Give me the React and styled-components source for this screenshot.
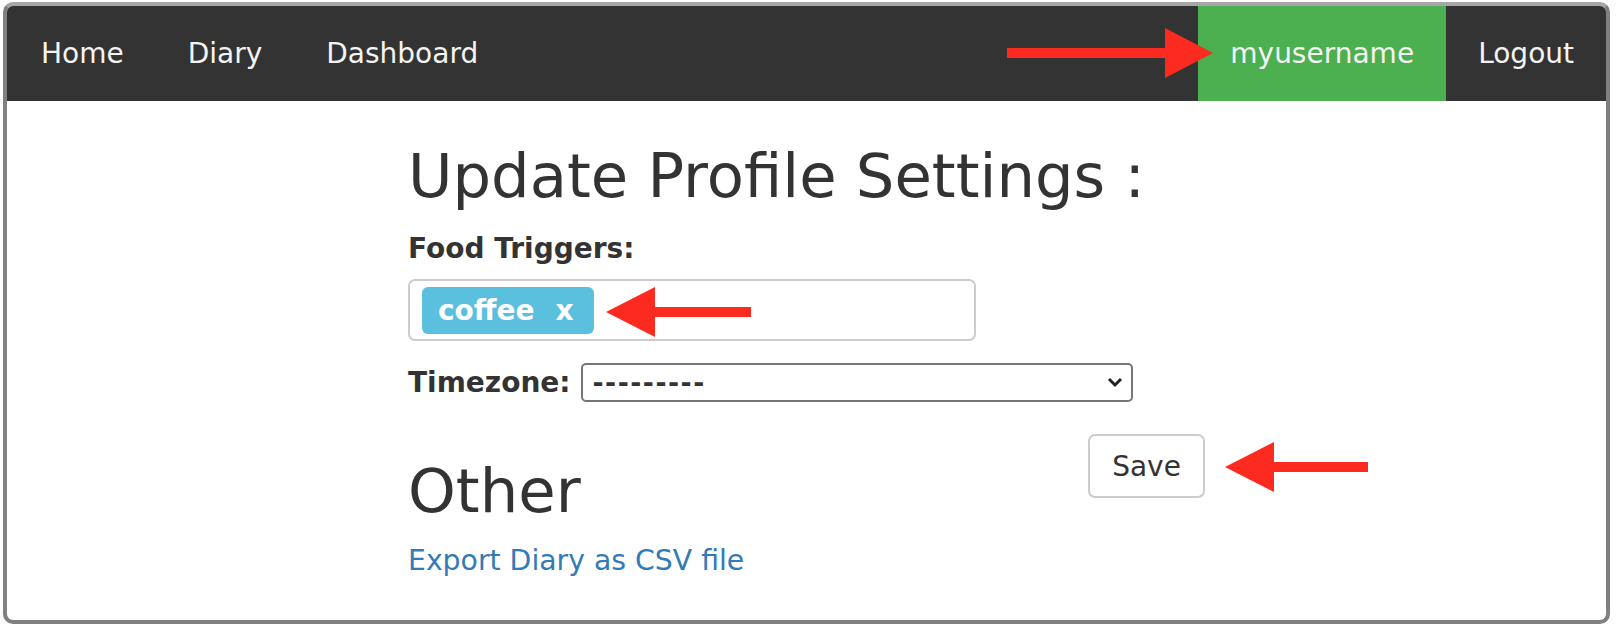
import React from "react";
import styled, { createGlobalStyle } from "styled-components";

const Global = createGlobalStyle`
  html, body { margin: 0; padding: 0; background: #ffffff; }
  body { font-family: "DejaVu Sans", Verdana, sans-serif; color: #333333; }
  * { box-sizing: border-box; }
`;

const Frame = styled.div`
  position: relative;
  margin: 2px 0 0 3px;
  width: 1607px;
  height: 622px;
  border: 4px solid #808080;
  border-top-color: #a6a6a6;
  border-radius: 10px;
  overflow: hidden;
  background: #ffffff;
`;

const Navbar = styled.nav`
  display: flex;
  align-items: stretch;
  height: 95px;
  padding-left: 2px;
  background: #333333;
`;

const NavGroup = styled.div`
  display: flex;
  align-items: stretch;
  margin-left: ${(p) => (p.$right ? "auto" : "0")};
`;

const NavLink = styled.a`
  display: flex;
  align-items: center;
  padding: 0 32px;
  font-size: 28px;
  color: #f4f4f4;
  text-decoration: none;
  background: ${(p) => (p.$active ? "#4caf50" : "transparent")};
`;

const Main = styled.main`
  padding-left: 401px;
`;

const Column = styled.div`
  width: 797px;
`;

const Title = styled.h1`
  margin: ${(p) => p.$top}px 0 0;
  font-size: 60.8px;
  line-height: 66px;
  font-weight: 400;
  color: #333333;
`;

const FieldLabel = styled.label`
  display: block;
  margin-top: 23px;
  font-size: 28px;
  line-height: 33px;
  font-weight: 700;
  color: #333333;
`;

const TagBox = styled.div`
  display: flex;
  align-items: center;
  margin-top: 14px;
  width: 568px;
  height: 62px;
  padding: 0 12px;
  border: 2px solid #cccccc;
  border-radius: 7px;
`;

const Tag = styled.span`
  display: inline-flex;
  align-items: center;
  height: 47px;
  padding: 0 20px 0 16px;
  border-radius: 6px;
  background: #5bc0de;
  color: #ffffff;
  font-size: 28px;
  font-weight: 700;
`;

const TagRemove = styled.span`
  margin-left: 21px;
`;

const TimezoneRow = styled.div`
  display: flex;
  align-items: center;
  gap: 10px;
  margin-top: 22px;
`;

const InlineLabel = styled.label`
  font-size: 28px;
  font-weight: 700;
  line-height: 33px;
  color: #333333;
`;

const SelectWrap = styled.div`
  position: relative;
  width: 552px;
  height: 39px;
`;

const Select = styled.select`
  appearance: none;
  -webkit-appearance: none;
  width: 100%;
  height: 100%;
  padding: 0 40px 0 10px;
  border: 2px solid #767676;
  border-radius: 5px;
  background: #ffffff;
  font-family: "DejaVu Sans", Verdana, sans-serif;
  font-size: 26.7px;
  font-weight: 700;
  letter-spacing: 1.5px;
  color: #333333;
  outline: none;
`;

const Chevron = styled.svg`
  position: absolute;
  right: 10px;
  top: 14px;
  pointer-events: none;
`;

const ActionRow = styled.div`
  display: flex;
  justify-content: space-between;
  align-items: flex-start;
  margin-top: 32px;
`;

const Button = styled.button`
  width: 117px;
  height: 64px;
  border: 2px solid #cccccc;
  border-radius: 7px;
  background: #ffffff;
  font-family: "DejaVu Sans", Verdana, sans-serif;
  font-size: 28px;
  color: #333333;
  cursor: pointer;
`;

const ExportLink = styled.a`
  display: inline-block;
  margin-top: 20px;
  font-size: 28.3px;
  line-height: 33px;
  color: #337ab7;
  text-decoration: none;
`;

const Arrow = styled.svg`
  position: absolute;
  left: ${(p) => p.$x}px;
  top: ${(p) => p.$y}px;
  pointer-events: none;
`;

const RED = "#fd2a1f";

function RightArrow({ x, y, length }) {
  const w = length;
  return (
    <Arrow $x={x} $y={y} width={w} height={50} viewBox={`0 0 ${w} 50`}>
      <rect x="0" y="20" width={w - 46} height="10" fill={RED} />
      <polygon points={`${w - 48},0 ${w},25 ${w - 48},50`} fill={RED} />
    </Arrow>
  );
}

function LeftArrow({ x, y, length }) {
  const w = length;
  return (
    <Arrow $x={x} $y={y} width={w} height={50} viewBox={`0 0 ${w} 50`}>
      <polygon points={`0,25 49,0 49,50`} fill={RED} />
      <rect x="47" y="20" width={w - 47} height="10" fill={RED} />
    </Arrow>
  );
}

export default function App() {
  return (
    <>
      <Global />
      <Frame>
        <Navbar>
          <NavGroup>
            <NavLink href="#">Home</NavLink>
            <NavLink href="#">Diary</NavLink>
            <NavLink href="#">Dashboard</NavLink>
          </NavGroup>
          <NavGroup $right>
            <NavLink href="#" $active>myusername</NavLink>
            <NavLink href="#">Logout</NavLink>
          </NavGroup>
        </Navbar>
        <Main>
          <Column>
            <Title $top={42}>Update Profile Settings :</Title>
            <FieldLabel>Food Triggers:</FieldLabel>
            <TagBox>
              <Tag>
                coffee<TagRemove>x</TagRemove>
              </Tag>
            </TagBox>
            <TimezoneRow>
              <InlineLabel>Timezone:</InlineLabel>
              <SelectWrap>
                <Select defaultValue="">
                  <option value="">---------</option>
                </Select>
                <Chevron width="16" height="11" viewBox="0 0 16 11">
                  <path d="M2 2 L8 8 L14 2" fill="none" stroke="#222" strokeWidth="3" />
                </Chevron>
              </SelectWrap>
            </TimezoneRow>
            <ActionRow>
              <Title $top={24}>Other</Title>
              <Button>Save</Button>
            </ActionRow>
            <ExportLink href="#">Export Diary as CSV file</ExportLink>
          </Column>
        </Main>
        <RightArrow x={1000} y={22} length={206} />
        <LeftArrow x={599} y={281} length={145} />
        <LeftArrow x={1218} y={436} length={143} />
      </Frame>
    </>
  );
}
